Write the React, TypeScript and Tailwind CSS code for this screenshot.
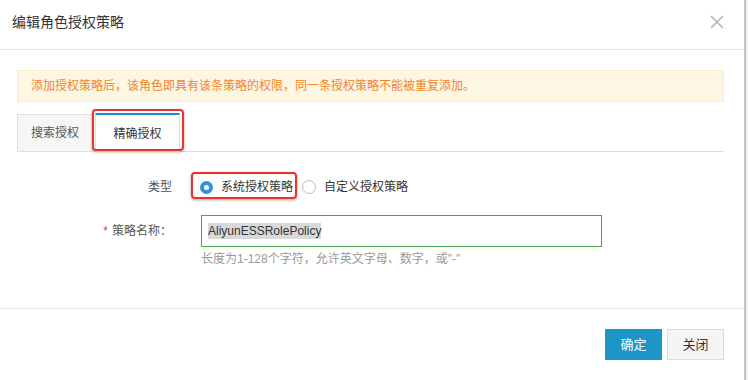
import { useState } from "react";

const cjk = "font-['Liberation_Sans','Noto_Sans_CJK_SC',sans-serif]";

export default function App() {
    const [kind, setKind] = useState<"system" | "custom">("system");
    const [tab, setTab] = useState<"search" | "exact">("exact");

    return (
        <div className={`flex w-[748px] h-[380px] bg-white ${cjk}`}>
            <div className="flex flex-col w-[744px] h-full bg-white">
                {/* 标题栏 */}
                <div className="flex items-center justify-between h-[50px] pl-3 pr-[20px] border-b border-[#e6e6e6]">
                    <h1 className="text-[14px] text-[#333] mt-[-4px]">编辑角色授权策略</h1>
                    <svg width="14" height="14" viewBox="0 0 14 14" className="mt-[-5px]">
                        <path d="M1 1 L13 13 M13 1 L1 13" stroke="#b5b5b5" strokeWidth="1.6" fill="none" />
                    </svg>
                </div>

                {/* 内容 */}
                <div className="h-[258px] px-[17px] pt-[20px] pr-[20px]">
                    <div className="flex items-center h-[32px] px-[13px] bg-[#fdf6e3] border border-[#fbebcd] text-[12px] text-[#f0862a]">
                        添加授权策略后，该角色即具有该条策略的权限，同一条授权策略不能被重复添加。
                    </div>

                    <div className="relative flex items-end h-[39px] mt-[11px] border-b border-[#dcdcdc]">
                        <button
                            onClick={() => setTab("search")}
                            className="h-[38px] w-[76px] mb-[-1px] bg-[#f6f6f6] border border-[#e0e0e0] text-[12px] text-[#555]"
                        >
                            搜索授权
                        </button>
                        <button
                            onClick={() => setTab("exact")}
                            className={`h-[39px] w-[85px] ml-[2px] mb-[-1px] border-x border-[#e0e0e0] border-t-2 border-t-[#1c90c4] text-[12px] text-[#333] ${tab === "exact" ? "bg-white" : "bg-[#f6f6f6]"}`}
                        >
                            精确授权
                        </button>
                        {/* 红框标注 */}
                        <div className="absolute left-[75px] top-[-4px] w-[92px] h-[42px] border-2 border-[#e8322e] rounded-[4px] shadow-[0_1px_3px_rgba(0,0,0,0.35)] pointer-events-none" />
                    </div>

                    {/* 表单 */}
                    <div className="flex items-center h-[24px] mt-[23px]">
                        <div className="w-[155px] text-right text-[12px] text-[#555]">类型</div>
                        <div className="relative flex items-center ml-[28px]">
                            <label className="flex items-center cursor-pointer" onClick={() => setKind("system")}>
                                <span
                                    className={`flex items-center justify-center w-[13px] h-[13px] rounded-full ${kind === "system" ? "bg-[#2e93dc]" : "border border-[#bbb] bg-white"}`}
                                >
                                    {kind === "system" && <span className="w-[5px] h-[5px] rounded-full bg-white" />}
                                </span>
                                <span className="ml-[8px] text-[12px] text-[#333]">系统授权策略</span>
                            </label>
                            <label className="flex items-center ml-[9px] cursor-pointer" onClick={() => setKind("custom")}>
                                <span
                                    className={`flex items-center justify-center w-[14px] h-[14px] rounded-full ${kind === "custom" ? "bg-[#2e93dc]" : "border border-[#bbb] bg-white"}`}
                                >
                                    {kind === "custom" && <span className="w-[5px] h-[5px] rounded-full bg-white" />}
                                </span>
                                <span className="ml-[8px] text-[12px] text-[#333]">自定义授权策略</span>
                            </label>
                            <div className="absolute left-[-9px] top-[-6px] w-[106px] h-[27px] border-2 border-[#e8322e] rounded-[4px] shadow-[0_1px_3px_rgba(0,0,0,0.35)] pointer-events-none" />
                        </div>
                    </div>

                    <div className="flex items-center mt-[16px]">
                        <div className="w-[155px] text-right text-[12px] text-[#555]">
                            <span className="text-[#e4393c] mr-[4px]">*</span>策略名称：
                        </div>
                        <div className="ml-[29px] flex items-center w-[401px] h-[32px] border border-[#47a447] px-[6px]">
                            <span className="bg-[#d9d9d9] text-[12px] leading-[16px] text-[#333] font-['Liberation_Sans',sans-serif]">
                                AliyunESSRolePolicy
                            </span>
                        </div>
                    </div>
                    <div className="ml-[184px] mt-[4px] text-[12px] leading-[16px] text-[#999]">
                        长度为1-128个字符，允许英文字母、数字，或"-"
                    </div>
                </div>

                {/* 底部按钮 */}
                <div className="flex justify-end gap-[5px] pt-[20px] pr-[20px] border-t border-[#e6e6e6]">
                    <button className="w-[57px] h-[31px] bg-[#1d95c9] text-white text-[13px]">确定</button>
                    <button className="w-[57px] h-[31px] bg-[#f5f5f5] border border-[#dcdcdc] text-[#333] text-[13px]">关闭</button>
                </div>
            </div>
            <div className="w-[2px] h-full bg-[#c4c4c4]" />
            <div className="w-[2px] h-full bg-[#efefef]" />
        </div>
    );
}
